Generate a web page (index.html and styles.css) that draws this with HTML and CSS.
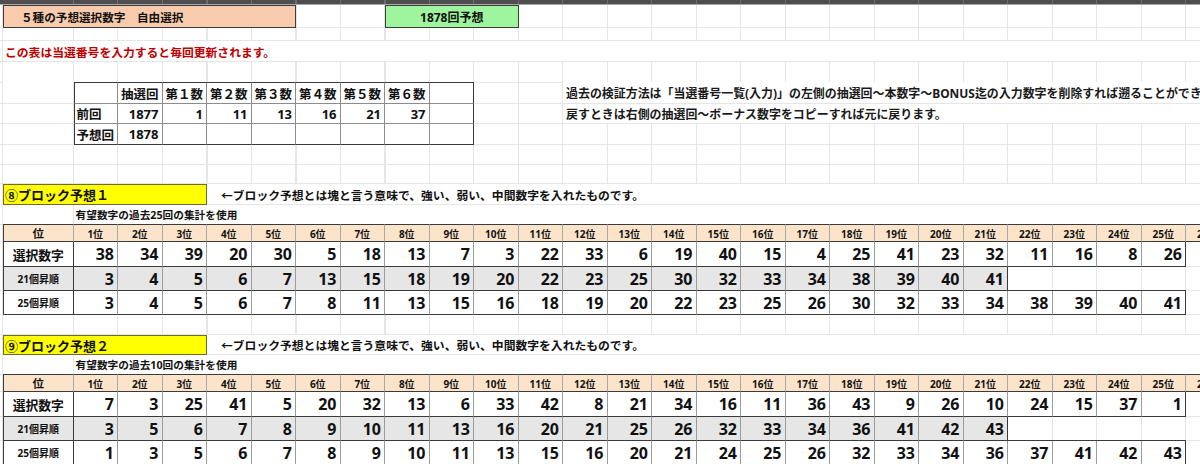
FILE: index.html
```html
<!DOCTYPE html>
<html lang="ja">
<head>
<meta charset="utf-8">
<title>5種の予想選択数字</title>
<link rel="stylesheet" href="styles.css">
</head>
<body>
<div class="sheet">
  <div class="topbar"></div>

  <div class="row h23">
    <div class="box orange span-orange">５種の予想選択数字　自由選択</div>
    <div class="box green span-green">1878回予想</div>
  </div>
  <div class="row h13"></div>
  <div class="row h21">
    <div class="txt red span-red">この表は当選番号を入力すると毎回更新されます。</div>
  </div>
  <div class="row h21"></div>

  <div class="row h21 tstart">
    <div class="sc sc-first sc-top at3"></div>
    <div class="sc sc-top ctr">抽選回</div>
    <div class="sc sc-top ctr">第１数</div>
    <div class="sc sc-top ctr">第２数</div>
    <div class="sc sc-top ctr">第３数</div>
    <div class="sc sc-top ctr">第４数</div>
    <div class="sc sc-top ctr">第５数</div>
    <div class="sc sc-top ctr">第６数</div>
    <div class="sc sc-top sc-last"></div>
    <div class="txt note at14">過去の検証方法は「当選番号一覧(入力)」の左側の抽選回～本数字～BONUS迄の入力数字を削除すれば遡ることができます。</div>
  </div>
  <div class="row h20">
    <div class="sc sc-first at3 lft">前回</div>
    <div class="sc rgt">1877</div>
    <div class="sc rgt">1</div>
    <div class="sc rgt">11</div>
    <div class="sc rgt">13</div>
    <div class="sc rgt">16</div>
    <div class="sc rgt">21</div>
    <div class="sc rgt">37</div>
    <div class="sc sc-last"></div>
    <div class="txt note at14">戻すときは右側の抽選回～ボーナス数字をコピーすれば元に戻ります。</div>
  </div>
  <div class="row h21">
    <div class="sc sc-first sc-bottom at3 lft">予想回</div>
    <div class="sc sc-bottom rgt">1878</div>
    <div class="sc sc-bottom"></div>
    <div class="sc sc-bottom"></div>
    <div class="sc sc-bottom"></div>
    <div class="sc sc-bottom"></div>
    <div class="sc sc-bottom"></div>
    <div class="sc sc-bottom"></div>
    <div class="sc sc-bottom sc-last"></div>
  </div>
  <div class="row h20"></div>
  <div class="row h19"></div>

  <!-- Block 1 -->
  <div class="row h21">
    <div class="box yellow span-yellow">⑧ブロック予想１</div>
    <div class="txt arrow span-arrow">←ブロック予想とは塊と言う意味で、強い、弱い、中間数字を入れたものです。</div>
  </div>
  <div class="row h20">
    <div class="txt sub span-sub">有望数字の過去25回の集計を使用</div>
  </div>
  <div class="row h17 tstart">
    <div class="hc hc-first">位</div>
    <div class="hc">1位</div><div class="hc">2位</div><div class="hc">3位</div><div class="hc">4位</div><div class="hc">5位</div>
    <div class="hc">6位</div><div class="hc">7位</div><div class="hc">8位</div><div class="hc">9位</div><div class="hc">10位</div>
    <div class="hc">11位</div><div class="hc">12位</div><div class="hc">13位</div><div class="hc">14位</div><div class="hc">15位</div>
    <div class="hc">16位</div><div class="hc">17位</div><div class="hc">18位</div><div class="hc">19位</div><div class="hc">20位</div>
    <div class="hc">21位</div><div class="hc">22位</div><div class="hc">23位</div><div class="hc">24位</div><div class="hc">25位</div>
    <div class="hc">26位</div>
  </div>
  <div class="row h25">
    <div class="lc big">選択数字</div>
    <div class="nc">38</div><div class="nc">34</div><div class="nc">39</div><div class="nc">20</div><div class="nc">30</div>
    <div class="nc">5</div><div class="nc">18</div><div class="nc">13</div><div class="nc">7</div><div class="nc">3</div>
    <div class="nc">22</div><div class="nc">33</div><div class="nc">6</div><div class="nc">19</div><div class="nc">40</div>
    <div class="nc">15</div><div class="nc">4</div><div class="nc">25</div><div class="nc">41</div><div class="nc">23</div>
    <div class="nc">32</div><div class="nc">11</div><div class="nc">16</div><div class="nc">8</div><div class="nc nc-last">26</div>
  </div>
  <div class="row h24">
    <div class="lc small gray">21個昇順</div>
    <div class="nc gray">3</div><div class="nc gray">4</div><div class="nc gray">5</div><div class="nc gray">6</div><div class="nc gray">7</div>
    <div class="nc gray">13</div><div class="nc gray">15</div><div class="nc gray">18</div><div class="nc gray">19</div><div class="nc gray">20</div>
    <div class="nc gray">22</div><div class="nc gray">23</div><div class="nc gray">25</div><div class="nc gray">30</div><div class="nc gray">32</div>
    <div class="nc gray">33</div><div class="nc gray">34</div><div class="nc gray">38</div><div class="nc gray">39</div><div class="nc gray">40</div>
    <div class="nc gray nc-last">41</div>
    <div class="ec"></div><div class="ec"></div><div class="ec"></div><div class="ec"></div>
  </div>
  <div class="row h24">
    <div class="lc small">25個昇順</div>
    <div class="nc">3</div><div class="nc">4</div><div class="nc">5</div><div class="nc">6</div><div class="nc">7</div>
    <div class="nc">8</div><div class="nc">11</div><div class="nc">13</div><div class="nc">15</div><div class="nc">16</div>
    <div class="nc">18</div><div class="nc">19</div><div class="nc">20</div><div class="nc">22</div><div class="nc">23</div>
    <div class="nc">25</div><div class="nc">26</div><div class="nc">30</div><div class="nc">32</div><div class="nc">33</div>
    <div class="nc">34</div><div class="nc">38</div><div class="nc">39</div><div class="nc">40</div><div class="nc nc-last">41</div>
  </div>
  <div class="row h20"></div>

  <!-- Block 2 -->
  <div class="row h20">
    <div class="box yellow span-yellow">⑨ブロック予想２</div>
    <div class="txt arrow span-arrow">←ブロック予想とは塊と言う意味で、強い、弱い、中間数字を入れたものです。</div>
  </div>
  <div class="row h20">
    <div class="txt sub span-sub">有望数字の過去10回の集計を使用</div>
  </div>
  <div class="row h17 tstart">
    <div class="hc hc-first">位</div>
    <div class="hc">1位</div><div class="hc">2位</div><div class="hc">3位</div><div class="hc">4位</div><div class="hc">5位</div>
    <div class="hc">6位</div><div class="hc">7位</div><div class="hc">8位</div><div class="hc">9位</div><div class="hc">10位</div>
    <div class="hc">11位</div><div class="hc">12位</div><div class="hc">13位</div><div class="hc">14位</div><div class="hc">15位</div>
    <div class="hc">16位</div><div class="hc">17位</div><div class="hc">18位</div><div class="hc">19位</div><div class="hc">20位</div>
    <div class="hc">21位</div><div class="hc">22位</div><div class="hc">23位</div><div class="hc">24位</div><div class="hc">25位</div>
    <div class="hc">26位</div>
  </div>
  <div class="row h25">
    <div class="lc big">選択数字</div>
    <div class="nc">7</div><div class="nc">3</div><div class="nc">25</div><div class="nc">41</div><div class="nc">5</div>
    <div class="nc">20</div><div class="nc">32</div><div class="nc">13</div><div class="nc">6</div><div class="nc">33</div>
    <div class="nc">42</div><div class="nc">8</div><div class="nc">21</div><div class="nc">34</div><div class="nc">16</div>
    <div class="nc">11</div><div class="nc">36</div><div class="nc">43</div><div class="nc">9</div><div class="nc">26</div>
    <div class="nc">10</div><div class="nc">24</div><div class="nc">15</div><div class="nc">37</div><div class="nc nc-last">1</div>
  </div>
  <div class="row h24">
    <div class="lc small gray">21個昇順</div>
    <div class="nc gray">3</div><div class="nc gray">5</div><div class="nc gray">6</div><div class="nc gray">7</div><div class="nc gray">8</div>
    <div class="nc gray">9</div><div class="nc gray">10</div><div class="nc gray">11</div><div class="nc gray">13</div><div class="nc gray">16</div>
    <div class="nc gray">20</div><div class="nc gray">21</div><div class="nc gray">25</div><div class="nc gray">26</div><div class="nc gray">32</div>
    <div class="nc gray">33</div><div class="nc gray">34</div><div class="nc gray">36</div><div class="nc gray">41</div><div class="nc gray">42</div>
    <div class="nc gray nc-last">43</div>
    <div class="ec"></div><div class="ec"></div><div class="ec"></div><div class="ec"></div>
  </div>
  <div class="row h24">
    <div class="lc small">25個昇順</div>
    <div class="nc">1</div><div class="nc">3</div><div class="nc">5</div><div class="nc">6</div><div class="nc">7</div>
    <div class="nc">8</div><div class="nc">9</div><div class="nc">10</div><div class="nc">11</div><div class="nc">13</div>
    <div class="nc">15</div><div class="nc">16</div><div class="nc">20</div><div class="nc">21</div><div class="nc">24</div>
    <div class="nc">25</div><div class="nc">26</div><div class="nc">32</div><div class="nc">33</div><div class="nc">34</div>
    <div class="nc">36</div><div class="nc">37</div><div class="nc">41</div><div class="nc">42</div><div class="nc nc-last">43</div>
  </div>
</div>
</body>
</html>
```

FILE: styles.css
```css
html, body {
  margin: 0;
  padding: 0;
  background: #fff;
}
body {
  width: 1200px;
  height: 464px;
  overflow: hidden;
}
.sheet {
  font-family: "Noto Sans", "Noto Sans CJK JP", sans-serif;
  font-weight: 700;
  color: #111;
  width: 1240px;
}
.topbar {
  height: 5px;
  box-sizing: border-box;
  border-bottom: 1px solid #a8a8a8;
  background-color: #4e4e4e;
  background-image: repeating-linear-gradient(to right, #6c6c6c 0 1px, transparent 1px 44.5px);
  background-position: 73px 0;
  background-repeat: no-repeat;
}
.row {
  display: grid;
  grid-template-columns: 3px 70.5px repeat(26, 44.5px);
  grid-template-rows: 100%;
  box-sizing: border-box;
  background-image:
    linear-gradient(to top, #e6e6e6 1px, transparent 1px),
    linear-gradient(to right, transparent 2px, #e6e6e6 2px, #e6e6e6 3px, #fff 3px, #fff 73px, transparent 73px),
    repeating-linear-gradient(to right, #e6e6e6 0 1px, transparent 1px 44.5px);
  background-size: 100% 100%, 100% 100%, 100% 100%;
  background-position: 0 0, 0 0, 73px 0;
  background-repeat: no-repeat, no-repeat, no-repeat;
}
.h13 { height: 13px; }
.h17 { height: 17px; }
.h19 { height: 19px; }
.h20 { height: 20px; }
.h21 { height: 21px; }
.h23 { height: 23px; }
.h24 { height: 24px; }
.h25 { height: 25px; }
.tstart { margin-top: -1px; }
.tstart.h17 { height: 18px; }
.tstart.h21 { height: 22px; }

/* boxes in top area */
.box {
  box-sizing: border-box;
  border: 1px solid #3c3c3c;
  display: flex;
  align-items: center;
  font-size: 11.6px;
  white-space: nowrap;
}
.orange { background: #f8cbad; padding-left: 17px; }
.green { background: #9ef59e; justify-content: center; font-size: 12px; }
.yellow {
  background: #ffff00;
  padding-left: 1px;
  font-size: 13px;
  border-color: #6b6b34;
}
.span-orange { grid-column: 2 / 8; }
.span-green { grid-column: 10 / 13; }
.span-yellow { grid-column: 2 / 6; }
.span-arrow { grid-column: 6 / -1; padding-left: 14px; }
.span-red { grid-column: 2 / -1; padding-left: 2px; }
.span-sub { grid-column: 3 / -1; padding-left: 2px; }
.at3 { grid-column-start: 3; }
.at14 { grid-column: 14 / -1; padding-left: 3px; }

.txt {
  display: flex;
  align-items: center;
  white-space: nowrap;
  overflow: hidden;
  background: #fff;
  margin-bottom: 1px;
  font-size: 11.8px;
}
.red { color: #c00000; font-size: 11.8px; }
.note { font-size: 11.95px; color: #1a1a1a; }
.arrow { font-size: 11.8px; }
.sub { font-size: 10.7px; }

/* small summary table */
.sc {
  box-sizing: border-box;
  border-right: 1px solid #8c8c8c;
  border-bottom: 1px solid #8c8c8c;
  display: flex;
  align-items: center;
  font-size: 12.5px;
  white-space: nowrap;
  background: #fff;
}
.sc-first { border-left: 1px solid #3a3a3a; }
.sc-last { border-right: 1px solid #3a3a3a; }
.sc-top { border-top: 1px solid #3a3a3a; }
.sc-bottom { border-bottom-color: #3a3a3a; }
.ctr { justify-content: center; }
.lft { justify-content: flex-start; padding-left: 2px; }
.rgt { justify-content: flex-end; padding-right: 3px; font-size: 13px; }

/* big tables */
.hc {
  box-sizing: border-box;
  background: #fce4ca;
  border-top: 1px solid #3a3a3a;
  border-bottom: 1px solid #3a3a3a;
  border-right: 1px solid #a9a9a9;
  display: flex;
  align-items: center;
  justify-content: center;
  font-size: 10px;
  white-space: nowrap;
  overflow: hidden;
}
.hc-first {
  grid-column-start: 2;
  border-left: 1px solid #3a3a3a;
  font-size: 11.5px;
}
.lc {
  grid-column-start: 2;
  box-sizing: border-box;
  border-left: 1px solid #3a3a3a;
  border-right: 1px solid #3a3a3a;
  border-bottom: 1px solid #3a3a3a;
  background: #fff;
  display: flex;
  align-items: center;
  justify-content: center;
  white-space: nowrap;
}
.lc.big { font-size: 12.8px; }
.lc.small { font-size: 10px; }
.nc {
  box-sizing: border-box;
  border-right: 1px solid #9c9c9c;
  border-bottom: 1px solid #3a3a3a;
  background: #fff;
  display: flex;
  align-items: center;
  justify-content: flex-end;
  padding-right: 3px;
  font-size: 16px;
}
.nc-last { border-right-color: #3a3a3a; }
.gray { background: #e7e6e6; }
.ec {
  box-sizing: border-box;
  border-bottom: 1px solid #3a3a3a;
}
```
